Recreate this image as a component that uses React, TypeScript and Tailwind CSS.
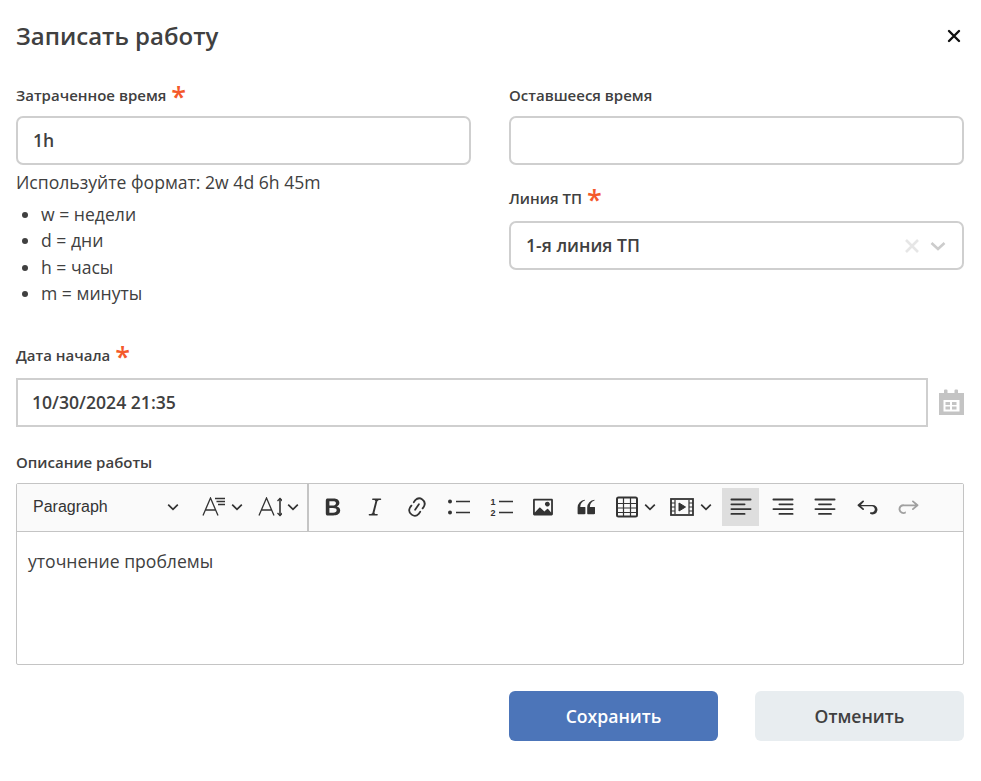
import React from "react";

const Ic = ({ d, cls = "w-6 h-6", fill = "#333" }: { d: string; cls?: string; fill?: string }) => (
  <svg viewBox="0 0 20 20" className={cls} fill={fill}><path d={d} /></svg>
);

const Chev = ({ cls = "w-[12px] h-[12px]" }: { cls?: string }) => (
  <svg viewBox="0 0 10 10" className={`${cls} shrink-0`} fill="none" stroke="#333" strokeWidth="1.4"><path d="M1 3l4 4 4-4" /></svg>
);

const Star = () => <span className="text-[#f4592b] text-[27px] leading-[24px] font-semibold relative top-[2px] ml-[5px]">*</span>;

const Btn = ({ children, active, w = "w-[37px]" }: { children: React.ReactNode; active?: boolean; w?: string }) => (
  <div className={`${w} h-[38px] flex items-center justify-center shrink-0 ${active ? "bg-[#dedede]" : ""}`}>{children}</div>
);

const paths = {
  bold: "M10.187 17H5.773c-.637 0-1.092-.138-1.364-.415-.273-.277-.409-.718-.409-1.323V4.738c0-.617.14-1.062.419-1.332.279-.27.73-.406 1.354-.406h4.68c.69 0 1.288.041 1.793.124.506.083.96.242 1.36.478.341.197.644.447.906.75a3.262 3.262 0 0 1 .808 2.162c0 1.401-.722 2.426-2.167 3.075C15.05 10.175 16 11.315 16 13.01a3.756 3.756 0 0 1-2.296 3.504 6.1 6.1 0 0 1-1.517.377c-.571.073-1.238.11-2 .11zm-.217-6.217H7v4.087h3.069c1.977 0 2.965-.69 2.965-2.072 0-.707-.256-1.22-.768-1.537-.512-.319-1.277-.478-2.296-.478zM7 5.13v3.619h2.606c.729 0 1.292-.067 1.69-.2a1.6 1.6 0 0 0 .91-.765c.165-.267.247-.566.247-.897 0-.707-.26-1.176-.778-1.409-.519-.232-1.31-.348-2.375-.348H7z",
  italic: "m9.586 14.633.021.004c-.036.335.095.655.393.962.082.083.173.15.274.201h1.474a.6.6 0 1 1 0 1.2H5.304a.6.6 0 0 1 0-1.2h1.15c.474-.07.809-.182 1.005-.334.157-.122.291-.32.404-.597l2.416-9.55a1.053 1.053 0 0 0-.281-.823 1.12 1.12 0 0 0-.442-.296H8.15a.6.6 0 0 1 0-1.2h6.443a.6.6 0 1 1 0 1.2h-1.195c-.376.056-.65.155-.823.296-.215.175-.423.439-.623.79l-2.366 9.347z",
  link: "m11.077 15 .991-1.416a.75.75 0 1 1 1.229.86l-1.148 1.64a.748.748 0 0 1-.217.206 5.251 5.251 0 0 1-8.503-5.955.741.741 0 0 1 .12-.274l1.147-1.639a.75.75 0 1 1 1.228.86L4.933 10.7l.006.003a3.75 3.75 0 0 0 6.132 4.294l.006.004zm5.494-5.335a.748.748 0 0 1-.12.274l-1.147 1.639a.75.75 0 1 1-1.228-.86l.86-1.23a3.75 3.75 0 0 0-6.144-4.301l-.86 1.229a.75.75 0 0 1-1.229-.86l1.148-1.64a.748.748 0 0 1 .217-.206 5.251 5.251 0 0 1 8.503 5.955zm-4.563-2.532a.75.75 0 0 1 .184 1.045l-3.155 4.505a.75.75 0 1 1-1.229-.86l3.155-4.506a.75.75 0 0 1 1.045-.184z",
  image: "M6.91 10.54c.26-.23.64-.21.88.03l3.36 3.14 2.23-2.06a.64.64 0 0 1 .87 0l2.52 2.97V4.5H3.2v10.12l3.71-4.08zm10.27-7.51c.6 0 1.09.47 1.09 1.05v11.84c0 .59-.49 1.06-1.09 1.06H2.79c-.6 0-1.09-.47-1.09-1.06V4.08c0-.58.49-1.05 1.1-1.05h14.38zm-5.22 5.56a1.96 1.96 0 1 1 3.4-1.96 1.96 1.96 0 0 1-3.4 1.96z",
  quote: "M3 10.423a6.5 6.5 0 0 1 6.056-6.408l.038.67C6.448 5.423 5.354 7.663 5.22 10H9c.552 0 .5.432.5.986v4.511c0 .554-.448.503-1 .503h-5c-.552 0-.5-.449-.5-1.003v-4.574zm8 0a6.5 6.5 0 0 1 6.056-6.408l.038.67c-2.646.739-3.74 2.979-3.873 5.315H17c.552 0 .5.432.5.986v4.511c0 .554-.448.503-1 .503h-5c-.552 0-.5-.449-.5-1.003v-4.574z",
  undo: "m5.042 9.367 2.189 1.837a.75.75 0 0 1-.965 1.149l-3.788-3.18a.747.747 0 0 1-.21-.284.75.75 0 0 1 .17-.945L6.23 4.762a.75.75 0 1 1 .964 1.15L4.863 8.366h8.917a4 4 0 1 1-1.257 7.252l.344-1.489a2.5 2.5 0 1 0 1.094-4.73l.008-.032H5.042z",
  redo: "m14.958 9.367-2.189 1.837a.75.75 0 0 0 .965 1.149l3.788-3.18a.747.747 0 0 0 .21-.284.75.75 0 0 0-.17-.945L13.77 4.762a.75.75 0 1 0-.964 1.15l2.331 1.955H6.22a4 4 0 1 0 1.257 7.252l-.344-1.489A2.5 2.5 0 1 1 6.039 9.4l-.008-.032h8.927z",
};

const Lines = ({ rows }: { rows: [number, number][] }) => (
  <svg viewBox="0 0 20 20" className="w-6 h-6" stroke="#333" strokeWidth="1.5" strokeLinecap="round">
    {rows.map(([a, b], i) => <line key={i} x1={a} x2={b} y1={3.75 + i * 4} y2={3.75 + i * 4} />)}
  </svg>
);

const inputCls = "h-[49px] border-2 border-[#cfcfcf] rounded-[7px] flex items-center bg-white";

export default function App() {
  return (
    <div className="w-[981px] h-[781px] bg-white text-[#404040] pl-[16px] pr-[17px] font-['Open_Sans','Noto_Sans',sans-serif] overflow-hidden">
      <div className="h-[74px] pb-[2px] flex items-center justify-between">
        <h1 className="text-[24px] font-semibold leading-[32px] text-[#404040]">Записать работу</h1>
        <svg viewBox="0 0 14 14" className="w-[14px] h-[14px] mr-[3px]" stroke="#111" strokeWidth="2.4" strokeLinecap="round"><path d="M2 2l10 10M12 2L2 12" /></svg>
      </div>

      <div className="grid grid-cols-[455px_455px] gap-x-[38px]">
        <div>
          <div className="h-[42px] flex items-start pt-[9px] text-[15px] font-semibold leading-[24px]">Затраченное время<Star /></div>
          <div className={`${inputCls} pl-[15px] text-[17.6px] font-semibold`}>1h</div>
          <p className="text-[17.6px] leading-[24px] mt-[5px]">Используйте формат: 2w 4d 6h 45m</p>
          <ul className="list-disc pl-[25px] text-[17.6px] leading-[26.4px] mt-[7px]">
            <li>w = недели</li>
            <li>d = дни</li>
            <li>h = часы</li>
            <li>m = минуты</li>
          </ul>
        </div>
        <div>
          <div className="h-[42px] flex items-start pt-[9px] text-[15px] font-semibold leading-[24px]">Оставшееся время</div>
          <div className={inputCls} />
          <div className="h-[56px] flex items-end pb-[11px] text-[15px] font-semibold leading-[24px]">Линия ТП<Star /></div>
          <div className={`${inputCls} pl-[15px] pr-[16px] justify-between text-[17.6px] font-semibold`}>
            <span>1-я линия ТП</span>
            <span className="flex items-center gap-[10px]">
              <svg viewBox="0 0 16 16" className="w-[16px] h-[16px]" stroke="#e6e6e6" strokeWidth="2.6"><path d="M2 2l12 12M14 2L2 14" /></svg>
              <svg viewBox="0 0 16 16" className="w-[16px] h-[16px]" fill="none" stroke="#cccccc" strokeWidth="2.6"><path d="M1.5 5l6.5 6 6.5-6" /></svg>
            </span>
          </div>
        </div>
      </div>

      <div className="mt-[35.4px] h-[36px] flex items-start text-[15px] font-semibold leading-[24px] pt-[1px]">Дата начала<Star /></div>
      <div className="flex items-center h-[49px]">
        <div className="w-[912px] h-[49px] border-2 border-[#cfcfcf] flex items-center pl-[14px] text-[17.6px] font-semibold">10/30/2024 21:35</div>
        <svg viewBox="0 0 26 26" className="w-[26px] h-[26px] ml-[10px] mb-[2px] shrink-0" fill="#c4c4c4">
          <path d="M6 1.500a1 1 0 0 1 1-1h1.500a1 1 0 0 1 1 1V4h7V1.500a1 1 0 0 1 1-1H19a1 1 0 0 1 1 1V4h6v22H1V4h5z" />
          <rect x="5.500" y="11" width="16" height="11.500" fill="white" />
          <rect x="7.500" y="13" width="4.500" height="3" /><rect x="14" y="13" width="4.500" height="3" /><rect x="7.500" y="17.500" width="4.500" height="3" /><rect x="14" y="17.500" width="4.500" height="3" />
        </svg>
      </div>

      <div className="mt-[23px] h-[33px] text-[15px] font-semibold leading-[24px]">Описание работы</div>

      <div className="border border-[#c4c4c4] rounded-[2px] w-[948px]">
        <div className="h-[48px] bg-[#fafafa] border-b border-[#c4c4c4] flex items-center font-['Liberation_Sans',sans-serif] text-[#333]">
          <div className="w-[292px] h-full pb-[2px] flex items-center border-r-2 border-[#c4c4c4] shrink-0">
            <span className="w-[150px] pl-[16px] text-[16px] leading-[20px] text-[#333] shrink-0">Paragraph</span>
            <Chev />
            <svg viewBox="0 0 24 20" className="w-[24px] h-[20px] ml-[23px] shrink-0" fill="none" stroke="#333" strokeWidth="1.300">
              <path d="M1 18.500L8.500 1l7.500 17.500M3.800 13h9.400" /><path d="M13 1.500h10M14.500 4.500h8.500M16 7.500h7" strokeWidth="1.300" />
            </svg>
            <Chev cls="w-[12px] h-[12px] ml-[5px]" />
            <svg viewBox="0 0 24 20" className="w-[24px] h-[20px] ml-[15px] shrink-0" fill="none" stroke="#333" strokeWidth="1.300">
              <path d="M1 18.500L8.500 1l7.500 17.500M3.800 13h9.400" /><path d="M22 1.500v17" strokeWidth="1.600" /><path d="M19.500 4L22 1.500 24.500 4M19.500 16L22 18.500l2.500-2.500" />
            </svg>
            <Chev cls="w-[12px] h-[12px] ml-[5px]" />
          </div>
          <div className="flex items-center pl-[5px] pb-[2px] gap-[5px]">
            <Btn><Ic d={paths.bold} /></Btn>
            <Btn><Ic d={paths.italic} /></Btn>
            <Btn><Ic d={paths.link} /></Btn>
            <Btn>
              <svg viewBox="0 0 24 20" className="w-[24px] h-[20px]" fill="#333">
                <circle cx="3" cy="4.500" r="2" /><circle cx="3" cy="15.500" r="2" />
                <rect x="9" y="3.750" width="14" height="1.500" /><rect x="9" y="14.750" width="14" height="1.500" />
              </svg>
            </Btn>
            <Btn>
              <svg viewBox="0 0 24 20" className="w-[24px] h-[20px]" fill="#333">
                <text x="4" y="7.800" fontSize="9" fontWeight="700" textAnchor="middle" fontFamily="Liberation Sans">1</text>
                <text x="4" y="18.800" fontSize="9" fontWeight="700" textAnchor="middle" fontFamily="Liberation Sans">2</text>
                <rect x="10" y="3.750" width="14" height="1.500" /><rect x="10" y="14.750" width="14" height="1.500" />
              </svg>
            </Btn>
            <Btn w="w-[38px]"><Ic d={paths.image} /></Btn>
            <Btn w="w-[38px]"><Ic d={paths.quote} /></Btn>
            <div className="flex items-center w-[42px] ml-[6px] shrink-0">
              <svg viewBox="0 0 22 22" className="w-[22px] h-[22px] shrink-0" fill="none" stroke="#333">
                <rect x="1" y="1.500" width="20" height="19" rx="1.500" strokeWidth="2" />
                <path d="M1 7.500h20M1 12h20M1 16.500h20M7.500 2v18M14.500 2v18" strokeWidth="1.200" />
              </svg>
              <Chev cls="w-[12px] h-[12px] ml-[6px]" />
            </div>
            <div className="flex items-center w-[47px] ml-[7px] shrink-0">
              <svg viewBox="0 0 24 20" className="w-[24px] h-[20px] shrink-0" fill="none" stroke="#333">
                <rect x="1" y="2" width="22" height="16" strokeWidth="1.800" />
                <path d="M5 3v14M19 3v14" strokeWidth="1.200" />
                <path d="M1 6h4M1 10h4M1 14h4M19 6h4M19 10h4M19 14h4" strokeWidth="1" />
                <path d="M9 6l6.500 4L9 14z" fill="#333" />
              </svg>
              <Chev cls="w-[12px] h-[12px] ml-[6px]" />
            </div>
            <div className="flex items-center gap-[5px]">
              <Btn active><Lines rows={[[2, 18], [2, 13], [2, 18], [2, 13]]} /></Btn>
              <Btn><Lines rows={[[2, 18], [7, 18], [2, 18], [7, 18]]} /></Btn>
              <Btn><Lines rows={[[2, 18], [5, 15], [2, 18], [5, 15]]} /></Btn>
              <Btn><Ic d={paths.undo} /></Btn>
              <Btn><Ic d={paths.redo} fill="#a0a0a0" /></Btn>
            </div>
          </div>
        </div>
        <div className="h-[132px] px-[11px] pt-[17px] text-[17.6px] leading-[24px] text-[#404040]">уточнение проблемы</div>
      </div>

      <div className="flex justify-end gap-[37px] mt-[26px]">
        <button className="w-[209px] h-[50px] rounded-[6px] bg-[#4c75b9] text-white text-[17.6px] font-semibold">Сохранить</button>
        <button className="w-[209px] h-[50px] rounded-[6px] bg-[#e8edf0] text-[#404040] text-[17.6px] font-semibold">Отменить</button>
      </div>
    </div>
  );
}
